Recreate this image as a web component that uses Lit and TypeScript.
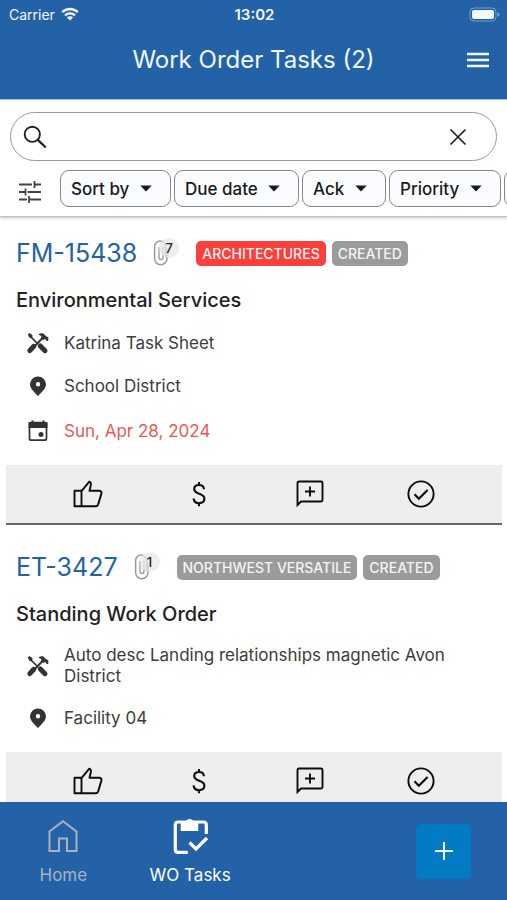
import { LitElement, html, css, svg, nothing } from "lit";
import { customElement, property } from "lit/decorators.js";
import { classMap } from "lit/directives/class-map.js";

interface Badge {
  text: string;
  alert?: boolean;
}

interface WorkOrder {
  id: string;
  files: number;
  badges: Badge[];
  title: string;
  task: string;
  place: string;
  due?: string;
}

const FILTERS = ["Sort by", "Due date", "Ack", "Priority", "Status"];

const ORDERS: WorkOrder[] = [
  {
    id: "FM-15438",
    files: 7,
    badges: [{ text: "ARCHITECTURES", alert: true }, { text: "CREATED" }],
    title: "Environmental Services",
    task: "Katrina Task Sheet",
    place: "School District",
    due: "Sun, Apr 28, 2024",
  },
  {
    id: "ET-3427",
    files: 1,
    badges: [{ text: "NORTHWEST VERSATILE" }, { text: "CREATED" }],
    title: "Standing Work Order",
    task: "Auto desc Landing relationships magnetic Avon District",
    place: "Facility 04",
  },
];

const icon = (w: number, h: number, body: unknown) => html`<svg
  width=${w}
  height=${h}
  viewBox="0 0 ${w} ${h}"
  fill="none"
  stroke="currentColor"
  aria-hidden="true"
>
  ${body}
</svg>`;

const wifi = icon(18, 14, svg`
  <path d="M1.2 5.2a11.2 11.2 0 0 1 15.6 0" stroke-width="2.4"/>
  <path d="M4 8.3a7.2 7.2 0 0 1 10 0" stroke-width="2.3"/>
  <path d="M9 13.6 5.9 10.6a4.4 4.4 0 0 1 6.2 0Z" fill="currentColor" stroke="none"/>`);

const battery = icon(31, 15, svg`
  <rect x="1" y="1" width="26" height="13" rx="4" stroke-opacity=".4"/>
  <rect x="3" y="3" width="22" height="9" rx="2" fill="currentColor" stroke="none"/>
  <path d="M28.5 5.3q1.8 1 1.8 2.2t-1.8 2.2Z" fill="currentColor" fill-opacity=".5" stroke="none"/>`);

const menu = icon(24, 18, svg`<path d="M1 3h22M1 9h22M1 15h22" stroke-width="2.6"/>`);

const magnifier = icon(24, 24, svg`
  <circle cx="9.3" cy="9.3" r="7.6" stroke-width="1.9"/>
  <path d="m14.8 14.8 8 7.7" stroke-width="2.3"/>`);

const cross = icon(18, 18, svg`<path d="m1.5 1.5 15 15m0-15-15 15" stroke-width="1.7"/>`);

const sliders = icon(24, 24, svg`
  <path d="M1 4.5h13M16.5 4.5h6.5M16.5 1v7M1 12h6M9.5 12h13.5M7.5 8.5v7M1 19.5h8M11 19.5h12M11 16v7" stroke-width="1.8"/>`);

const caret = icon(12, 7, svg`<path d="M.3.5h11.4L6 6.500Z" fill="currentColor" stroke="none"/>`);

const clip = icon(20, 26, svg`
  <path d="M14 9v9.500a6.200 6.200 0 0 1-12.400 0V6.500a5.500 5.500 0 0 1 11 0V17" stroke-width="1.500"/>
  <path d="M10 7v10.500a2 2 0 0 1-4 0V7" stroke-width="1.300"/>`);

const tools = icon(24, 24, svg`
  <path d="m3 4 9 9" stroke-width="1.700"/>
  <path d="m1.800 3.600 1.600-1.500 3 2v2l-1.200 1.200-1.800-.500Z" fill="currentColor" stroke="none"/>
  <path d="m14.300 15 4.700 4.700" stroke-width="5" stroke-linecap="round"/>
  <path d="m8 16 8.500-9" stroke-width="1.900"/>
  <path d="m7.800 15.300-4 4.300" stroke-width="5" stroke-linecap="round"/>
  <path d="M12.300 3.600q2.200-1.800 5-1.200l3.200 3.200 1.800.600v3.600l-1.200.500-2.300-2.500-1.500 1.500-2.500-2.500.700-1.600Z" fill="currentColor" stroke="none"/>`);

const pin = icon(24, 24, svg`
  <path d="M12 2.500a8 8 0 0 0-8 7.800c0 4.700 5 8.300 8 11.900 3-3.600 8-7.200 8-11.900a8 8 0 0 0-8-7.800Zm0 5.500a2.200 2.200 0 1 1 0 4.400 2.200 2.200 0 0 1 0-4.400Z" fill="currentColor" fill-rule="evenodd" stroke="none"/>`);

const calendar = icon(24, 24, svg`
  <rect x="3.500" y="3.700" width="17" height="17.500" rx="2" stroke-width="1.700"/>
  <path d="M3.500 4h17v4h-17ZM6.500 1.500v3M17.500 1.500v3" fill="currentColor" stroke-width="2"/>
  <circle cx="15" cy="15.500" r="2.500" fill="currentColor" stroke="none"/>`);

const thumb = icon(30, 28, svg`
  <path d="M1.500 10.700h7v15.600h-7ZM8.500 11.200 16.300 1.700q1.800.700 1.600 3L16.500 10.700h10q2.300.300 2 2.700l-3.400 11.200q-.700 1.700-2.300 1.700H8.500" stroke-width="1.900" stroke-linejoin="round"/>`);

const dollar = icon(14, 26, svg`
  <path d="M12 8.300C11.800 5.500 9.800 4 7 4S2.200 5.400 2.200 8c0 6 10.200 3.500 10.200 9.600 0 2.900-2.200 4.600-5.400 4.600s-5.200-1.700-5.400-4.800M7 1v3M7 22v3.200" stroke-width="2.100"/>`);

const comment = icon(28, 28, svg`
  <path d="M1.500 25V3q0-1.500 1.500-1.500h22q1.500 0 1.500 1.500v17q0 1.500-1.500 1.500H5Z" stroke-width="1.900"/>
  <path d="M14 6.500v10M9 11.500h10" stroke-width="1.900"/>`);

const check = icon(28, 28, svg`
  <circle cx="14" cy="14" r="12.600" stroke-width="1.900"/>
  <path d="m7.500 14.300 4.300 4.400 8.800-8.700" stroke-width="2.200"/>`);

const house = icon(30, 34, svg`
  <path d="M1.500 32V12.500L15 2.200l13.500 10.300V32H19V19.500h-8V32Z" stroke-width="2"/>`);

const clipboard = icon(38, 38, svg`
  <path d="M16.700 35.400H7.300q-3 0-3-3V8q0-3 3-3h25q3 0 3 3v9" stroke-width="3.200"/>
  <path d="M9.700 5h5a4.200 4.200 0 0 1 8 0h4.600v9H9.700Zm9 .800a1.200 1.200 0 1 0 0-2.400 1.200 1.200 0 0 0 0 2.400Z" fill="currentColor" fill-rule="evenodd" stroke="none"/>
  <path d="m18.500 25.500 6.500 6.500L36 21" stroke-width="3.200"/>`);

const plus = icon(18, 18, svg`<path d="M9 0v18M0 9h18" stroke-width="2"/>`);

const ACTIONS = [
  { name: "Acknowledge", art: thumb },
  { name: "Costs", art: dollar },
  { name: "Add comment", art: comment },
  { name: "Complete", art: check },
];

@customElement("order-card")
export class OrderCard extends LitElement {
  @property({ attribute: false }) order!: WorkOrder;

  static styles = css`
    :host {
      display: block;
    }
    .body {
      padding: 20px 10px;
    }
    .head {
      display: flex;
      align-items: center;
      height: 32px;
    }
    .id {
      color: #2362a6;
      font-size: 25px;
      text-decoration: none;
    }
    .files {
      position: relative;
      display: flex;
      margin: 0 17px 0 16px;
      width: 26px;
      color: #9a9a9a;
    }
    .count {
      position: absolute;
      top: -2px;
      right: 0;
      width: 20px;
      border-radius: 10px;
      background: rgb(232 232 232 / 75%);
      color: #222;
      font-size: 13px;
      font-weight: 500;
      line-height: 20px;
      text-align: center;
    }
    .badges {
      display: flex;
      gap: 6px;
    }
    .badge {
      padding: 0 6px;
      border-radius: 5px;
      background: #9b9b9b;
      color: #f4f4f4;
      font-size: 14px;
      font-weight: 500;
      line-height: 25px;
      white-space: nowrap;
    }
    .alert {
      background: #f9403a;
    }
    .title {
      margin: 19px 0;
      color: #222;
      font-size: 20px;
      font-weight: 500;
      line-height: 24px;
    }
    .facts {
      display: flex;
      flex-direction: column;
      gap: 17px;
      margin: 0;
      padding: 0;
      list-style: none;
    }
    .fact {
      display: flex;
      align-items: center;
      gap: 14px;
      min-height: 28px;
      padding: 0 40px 0 10px;
      color: #3c3c3c;
      font-size: 17px;
      line-height: 21px;
    }
    .fact:first-child {
      min-height: 24px;
    }
    .fact svg {
      flex: none;
      color: #333;
    }
    .late {
      color: #ea5a55;
    }
    .actions {
      display: grid;
      grid-template-columns: repeat(4, 1fr);
      padding: 0 26px;
      border-bottom: 2px solid #666;
      background: #eee;
    }
    .action {
      display: grid;
      place-items: center;
      height: 58px;
      padding: 0;
      border: 0;
      background: none;
      color: #0c0c0c;
    }
  `;

  render() {
    const o = this.order;
    return html`
      <article>
        <div class="body">
          <div class="head">
            <a class="id" href="#${o.id}">${o.id}</a>
            <span class="files">${clip}<span class="count">${o.files}</span></span>
            <div class="badges">
              ${o.badges.map(
                (b) => html`<span class=${classMap({ badge: true, alert: !!b.alert })}>${b.text}</span>`
              )}
            </div>
          </div>
          <h2 class="title">${o.title}</h2>
          <ul class="facts">
            <li class="fact">${tools}<span>${o.task}</span></li>
            <li class="fact">${pin}<span>${o.place}</span></li>
            ${o.due ? html`<li class="fact">${calendar}<span class="late">${o.due}</span></li>` : nothing}
          </ul>
        </div>
        <div class="actions">
          ${ACTIONS.map((a) => html`<button class="action" aria-label=${a.name}>${a.art}</button>`)}
        </div>
      </article>
    `;
  }
}

@customElement("app-root")
export class AppRoot extends LitElement {
  static styles = css`
    :host {
      display: flex;
      flex-direction: column;
      height: 100vh;
      overflow: hidden;
      background: #fff;
      font-family: Inter, "Liberation Sans", sans-serif;
    }
    .top {
      flex: none;
      border-bottom: 1px solid #a9c8ea;
      background: #2362a6;
      color: #f2f8ff;
    }
    .status {
      display: grid;
      grid-template-columns: 1fr auto 1fr;
      align-items: center;
      height: 28px;
      padding: 0 7px 0 9px;
      font-size: 14px;
    }
    .carrier {
      display: flex;
      align-items: center;
      gap: 6px;
    }
    .clock {
      font-size: 15px;
      font-weight: 600;
    }
    .battery {
      display: flex;
      justify-content: flex-end;
    }
    .bar {
      display: grid;
      grid-template-columns: 24px 1fr 24px;
      align-items: center;
      height: 63px;
      padding: 0 17px 8px;
    }
    .heading {
      grid-column: 2;
      margin: 0;
      font-size: 24px;
      font-weight: 400;
      text-align: center;
    }
    .plain {
      display: grid;
      place-items: center;
      padding: 0;
      border: 0;
      background: none;
      color: inherit;
    }
    .tools {
      flex: none;
      padding-top: 12px;
      border-bottom: 1px solid #c4c4c4;
      box-shadow: 0 1px 3px rgb(0 0 0 / 25%);
    }
    .search {
      display: flex;
      align-items: center;
      gap: 12px;
      height: 47px;
      margin: 0 10px;
      padding: 0 29px 0 12px;
      border: 1px solid #999;
      border-radius: 25px;
      color: #222;
    }
    .field {
      flex: 1;
      min-width: 0;
      border: 0;
      outline: 0;
      background: none;
      font: inherit;
      font-size: 17px;
    }
    .filters {
      display: flex;
      align-items: center;
      gap: 3px;
      padding: 9px 0 9px 18px;
      overflow: hidden;
    }
    .tune {
      flex: none;
      width: 24px;
      margin-right: 15px;
      padding-top: 6px;
      color: #444;
    }
    .chip {
      display: grid;
      flex: none;
      align-items: center;
      color: #1a1a1a;
    }
    .select {
      grid-area: 1 / 1;
      height: 37px;
      padding: 0 40px 0 10px;
      border: 1px solid #868686;
      border-radius: 9px;
      appearance: none;
      background: #fafcff;
      color: inherit;
      font: inherit;
      font-size: 17px;
      font-weight: 500;
    }
    .chip svg {
      grid-area: 1 / 1;
      justify-self: end;
      margin-right: 19px;
      pointer-events: none;
    }
    .list {
      display: flex;
      flex: 1;
      flex-direction: column;
      gap: 6px;
      min-height: 0;
      padding: 0 5px 0 6px;
      overflow-y: auto;
      scrollbar-width: none;
    }
    .nav {
      display: grid;
      flex: none;
      grid-template-columns: repeat(4, 1fr);
      height: 98px;
      background: #2362a6;
    }
    .tab {
      display: flex;
      flex-direction: column;
      align-items: center;
      padding-top: 14px;
      color: #a9b2bf;
      font-size: 17px;
      line-height: 22px;
      text-decoration: none;
      white-space: nowrap;
    }
    .glyph {
      display: grid;
      place-items: center;
      height: 40px;
      margin-bottom: 8px;
    }
    .current {
      color: #fff;
    }
    .add {
      display: grid;
      grid-column: 4;
      place-items: center;
      place-self: center;
      width: 55px;
      height: 55px;
      padding: 0;
      border: 0;
      border-radius: 5px;
      background: #027bc4;
      color: #fff;
    }
  `;

  render() {
    return html`
      <header class="top">
        <div class="status">
          <span class="carrier">Carrier ${wifi}</span>
          <span class="clock">13:02</span>
          <span class="battery">${battery}</span>
        </div>
        <div class="bar">
          <h1 class="heading">Work Order Tasks (2)</h1>
          <button class="plain" aria-label="Menu">${menu}</button>
        </div>
      </header>
      <section class="tools">
        <div class="search">
          ${magnifier}
          <input class="field" type="text" aria-label="Search work orders" />
          <button class="plain" aria-label="Clear">${cross}</button>
        </div>
        <div class="filters">
          <button class="plain tune" aria-label="Filters">${sliders}</button>
          ${FILTERS.map(
            (f) => html`<label class="chip">
              <select class="select" aria-label=${f}>
                <option>${f}</option>
              </select>
              ${caret}
            </label>`
          )}
        </div>
      </section>
      <main class="list">
        ${ORDERS.map((o) => html`<order-card .order=${o}></order-card>`)}
      </main>
      <nav class="nav">
        <a class="tab" href="#home"><span class="glyph">${house}</span>Home</a>
        <a class="tab current" href="#tasks" aria-current="page"
          ><span class="glyph">${clipboard}</span>WO Tasks</a
        >
        <button class="add" aria-label="Add">${plus}</button>
      </nav>
    `;
  }
}
